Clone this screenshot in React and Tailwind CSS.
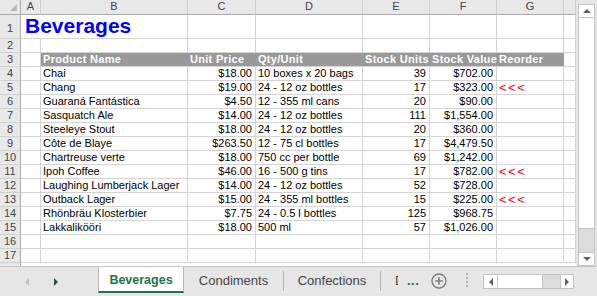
import React from "react";

const rows = [
  ["Chai", "$18.00", "10 boxes x 20 bags", "39", "$702.00", ""],
  ["Chang", "$19.00", "24 - 12 oz bottles", "17", "$323.00", "<<<"],
  ["Guaraná Fantástica", "$4.50", "12 - 355 ml cans", "20", "$90.00", ""],
  ["Sasquatch Ale", "$14.00", "24 - 12 oz bottles", "111", "$1,554.00", ""],
  ["Steeleye Stout", "$18.00", "24 - 12 oz bottles", "20", "$360.00", ""],
  ["Côte de Blaye", "$263.50", "12 - 75 cl bottles", "17", "$4,479.50", ""],
  ["Chartreuse verte", "$18.00", "750 cc per bottle", "69", "$1,242.00", ""],
  ["Ipoh Coffee", "$46.00", "16 - 500 g tins", "17", "$782.00", "<<<"],
  ["Laughing Lumberjack Lager", "$14.00", "24 - 12 oz bottles", "52", "$728.00", ""],
  ["Outback Lager", "$15.00", "24 - 355 ml bottles", "15", "$225.00", "<<<"],
  ["Rhönbräu Klosterbier", "$7.75", "24 - 0.5 l bottles", "125", "$968.75", ""],
  ["Lakkalikööri", "$18.00", "500 ml", "57", "$1,026.00", ""],
];

const cell =
  "border-r border-b border-[#d4d4d4] overflow-hidden whitespace-nowrap flex items-end leading-[13px] text-[11px] text-black";
const rowHdr =
  "bg-[#e8e8e8] border-r border-b border-r-[#ababab] border-b-[#d0d0d0] text-[#444] text-[11px] leading-[13px] flex items-end justify-center overflow-hidden";
const colHdr =
  "bg-[#e8e8e8] border-r border-b border-r-[#d0d0d0] border-b-[#ababab] text-[#444] text-[11px] leading-[13px] flex items-end justify-center pb-[1px]";
const band =
  "bg-[#999999] border-b border-b-[#d4d4d4] text-white font-bold text-[11px] leading-[13px] tracking-[0.3px] flex items-end pl-[2px] overflow-hidden whitespace-nowrap";

function Empty() {
  return <div className={cell}></div>;
}

export default function App() {
  const letters = ["A", "B", "C", "D", "E", "F", "G", ""];
  return (
    <div className="w-[597px] h-[296px] bg-[#e6e6e6] overflow-hidden flex flex-col font-['Liberation_Sans',Arial,sans-serif]">
      <div className="flex h-[266px]">
        <div className="grid grid-cols-[21px_20px_147px_68px_107px_67px_67px_67px_12px] grid-rows-[15px_24px_repeat(16,14px)_3px] bg-white w-[576px] h-[266px] overflow-hidden">
          {/* header row */}
          <div className="bg-[#e8e8e8] border-r border-b border-r-[#ababab] border-b-[#ababab] relative">
            <div className="absolute right-[3px] bottom-[3px] w-0 h-0 border-l-[7px] border-l-transparent border-b-[7px] border-b-[#b8b8b8]"></div>
          </div>
          {letters.map((l, i) => (
            <div key={i} className={colHdr}>
              {l}
            </div>
          ))}

          {/* row 1 */}
          <div className={rowHdr + " pb-[3px]"}>1</div>
          <div className="col-span-2 border-r border-b border-[#d4d4d4] flex items-end pl-[4px] pb-[2px] overflow-visible whitespace-nowrap">
            <span className="text-[21px] leading-[21px] font-bold text-[#0000ff]">Beverages</span>
          </div>
          <Empty />
          <Empty />
          <Empty />
          <Empty />
          <Empty />
          <Empty />

          {/* row 2 */}
          <div className={rowHdr}>2</div>
          <Empty />
          <Empty />
          <Empty />
          <Empty />
          <Empty />
          <Empty />
          <Empty />
          <Empty />

          {/* row 3 */}
          <div className={rowHdr}>3</div>
          <Empty />
          <div className={band}>Product Name</div>
          <div className={band}>Unit Price</div>
          <div className={band}>Qty/Unit</div>
          <div className={band}>Stock Units</div>
          <div className={band}>Stock Value</div>
          <div className={band}>Reorder</div>
          <Empty />

          {rows.map((r, i) => (
            <React.Fragment key={i}>
              <div className={rowHdr}>{i + 4}</div>
              <Empty />
              <div className={cell + " pl-[2px]"}>{r[0]}</div>
              <div className={cell + " justify-end pr-[3px]"}>{r[1]}</div>
              <div className={cell + " pl-[2px]"}>{r[2]}</div>
              <div className={cell + " justify-end pr-[3px]"}>{r[3]}</div>
              <div className={cell + " justify-end pr-[3px]"}>{r[4]}</div>
              <div className={cell + " pl-[2px]"}>
                <span className="text-[#ff0000] text-[13px] leading-[13px] tracking-[1.5px]">{r[5]}</span>
              </div>
              <Empty />
            </React.Fragment>
          ))}

          {[16, 17].map((n) => (
            <React.Fragment key={n}>
              <div className={rowHdr}>{n}</div>
              <Empty />
              <Empty />
              <Empty />
              <Empty />
              <Empty />
              <Empty />
              <Empty />
              <Empty />
            </React.Fragment>
          ))}
          <div className="bg-[#e8e8e8] border-r border-r-[#ababab]"></div>
          <div className="col-span-8 bg-white"></div>
        </div>

        {/* vertical scrollbar */}
        <div className="pl-[2px] pt-[4px]">
          <div className="w-[17px] h-[262px] border border-[#c4c4c4] bg-[#dcdcdc] flex flex-col">
            <div className="h-[13px] bg-white border-b border-[#c4c4c4] flex items-center justify-center">
              <div className="w-0 h-0 border-l-[4px] border-r-[4px] border-b-[4px] border-l-transparent border-r-transparent border-b-[#606060]"></div>
            </div>
            <div className="h-[211px] bg-white border-b border-[#c4c4c4]"></div>
            <div className="flex-1"></div>
            <div className="h-[13px] bg-white border-t border-[#c4c4c4] flex items-center justify-center">
              <div className="w-0 h-0 border-l-[4px] border-r-[4px] border-t-[4px] border-l-transparent border-r-transparent border-t-[#606060]"></div>
            </div>
          </div>
        </div>
      </div>

      {/* tab bar */}
      <div className="flex-1 flex border-t border-[#c4c4c4] relative">
        <div className="w-[98px] flex items-center">
          <div className="ml-[25px] w-0 h-0 border-t-[4px] border-b-[4px] border-r-[4px] border-t-transparent border-b-transparent border-r-[#c0c0c0] mt-[1px]"></div>
          <div className="ml-[25px] w-0 h-0 border-t-[4px] border-b-[4px] border-l-[4px] border-t-transparent border-b-transparent border-l-[#1d5a37] mt-[1px]"></div>
        </div>
        <div className="w-[86px] h-[26px] bg-white border-l border-r border-[#b8b8b8] border-b-2 border-b-[#217346] flex items-center justify-center">
          <span className="text-[12.5px] font-bold text-[#217346] leading-[14px] mt-[1px]">Beverages</span>
        </div>
        <div className="w-[99px] h-[26px] flex items-center justify-center">
          <span className="text-[13px] text-[#444] leading-[14px] mt-[1px]">Condiments</span>
        </div>
        <div className="w-px h-[20px] mt-[4px] bg-[#b0b0b0]"></div>
        <div className="w-[96px] h-[26px] flex items-center justify-center">
          <span className="text-[13px] text-[#444] leading-[14px] mt-[1px]">Confections</span>
        </div>
        <div className="w-px h-[20px] mt-[4px] bg-[#b0b0b0]"></div>
        <div className="w-[17px] h-[26px] flex items-center justify-end overflow-hidden">
          <div className="w-[3px] overflow-hidden">
            <span className="text-[13px] text-[#444] leading-[14px] block mt-[1px]">D</span>
          </div>
        </div>
        <div className="w-[33px] h-[26px] flex items-center pl-[9px]">
          <span className="text-[13px] font-bold text-[#217346] leading-[14px] tracking-[0.5px] mt-[2px]">...</span>
        </div>
        <div className="h-[26px] flex items-center">
          <svg width="16" height="16" viewBox="0 0 16 16" className="mt-[1px]">
            <circle cx="8" cy="8" r="7" fill="none" stroke="#7a7a7a" strokeWidth="1.3" />
            <path d="M8 4.2v7.6M4.2 8h7.6" stroke="#7a7a7a" strokeWidth="1.5" />
          </svg>
        </div>
        <div className="w-[21px] h-[26px] flex items-center justify-end">
          <div className="w-[2px] h-[15px] mt-[1px] bg-[repeating-linear-gradient(to_bottom,#b0b0b0_0px,#b0b0b0_2px,transparent_2px,transparent_4px)]"></div>
        </div>
        <div className="ml-[15px] mt-[7px] w-[91px] h-[15px] flex border border-[#c4c4c4] bg-[#dcdcdc]">
          <div className="w-[14px] bg-white border-r border-[#c4c4c4] flex items-center justify-center">
            <div className="w-0 h-0 border-t-[4px] border-b-[4px] border-r-[4px] border-t-transparent border-b-transparent border-r-[#606060]"></div>
          </div>
          <div className="w-[45px] bg-white border-r border-[#c4c4c4]"></div>
          <div className="flex-1"></div>
          <div className="w-[13px] bg-white border-l border-[#c4c4c4] flex items-center justify-center">
            <div className="w-0 h-0 border-t-[4px] border-b-[4px] border-l-[4px] border-t-transparent border-b-transparent border-l-[#606060]"></div>
          </div>
        </div>
      </div>
    </div>
  );
}
